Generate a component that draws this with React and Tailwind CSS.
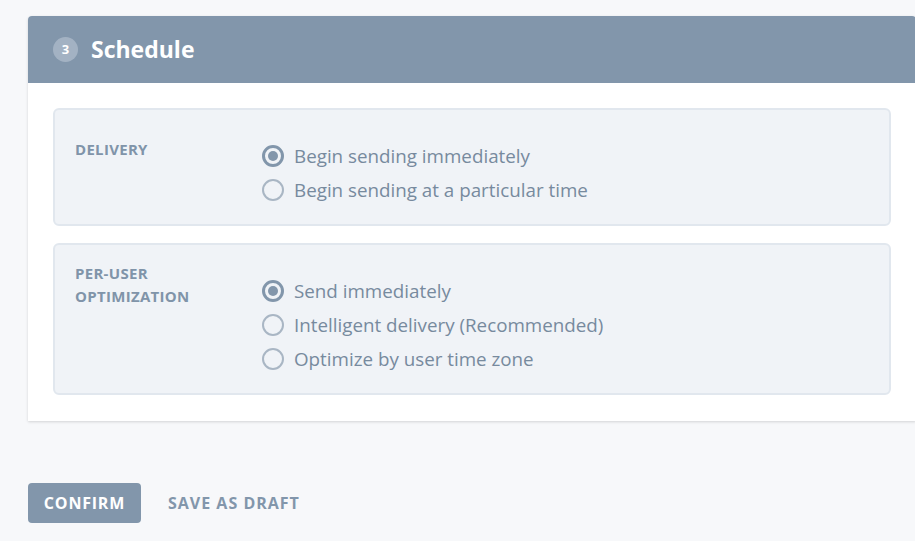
import React, { useState } from 'react';

const FONT = { fontFamily: '"Open Sans", "Liberation Sans", sans-serif' };

const GROUPS = [
  {
    name: 'delivery',
    label: ['DELIVERY'],
    options: ['Begin sending immediately', 'Begin sending at a particular time'],
  },
  {
    name: 'optimization',
    label: ['PER-USER', 'OPTIMIZATION'],
    options: ['Send immediately', 'Intelligent delivery (Recommended)', 'Optimize by user time zone'],
  },
];

function Radio({ checked, text, onClick }) {
  return (
    <div className="h-[34px] flex items-center cursor-pointer" onClick={onClick}>
      {checked ? (
        <span className="w-[22px] h-[22px] rounded-full border-[3px] border-[#8296ab] flex items-center justify-center">
          <span className="w-[10px] h-[10px] rounded-full bg-[#8296ab]" />
        </span>
      ) : (
        <span className="w-[22px] h-[22px] rounded-full border-2 border-[#a9b6c4]" />
      )}
      <span className="ml-[10px] text-[18.8px] text-[#778a9e]">{text}</span>
    </div>
  );
}

function Group({ g, value, onChange }) {
  return (
    <div className="flex bg-[#f0f3f7] border-2 border-[#e1e7ee] rounded-md pl-5 pt-[29px] pb-[17px]">
      <div className="w-[187px] h-[34px] flex items-center">
        <div className="mb-[13px] text-[15px] tracking-[0.3px] leading-[23px] font-bold text-[#8094a9]">
          {g.label.map(l => <div key={l}>{l}</div>)}
        </div>
      </div>
      <div>
        {g.options.map((o, i) => (
          <Radio key={o} text={o} checked={value === i} onClick={() => onChange(i)} />
        ))}
      </div>
    </div>
  );
}

export default function App() {
  const [vals, setVals] = useState({ delivery: 0, optimization: 0 });

  return (
    <div style={FONT} className="min-h-[541px] bg-[#f7f8fa] pt-4 pl-[28px] overflow-hidden">
      <div className="w-[888px] bg-white rounded-t shadow-[0_1px_3px_rgba(0,0,0,0.15)]">
        <div className="h-[67px] bg-[#8296ab] rounded-t flex items-center pl-[25px]">
          <span className="w-[25px] h-[25px] rounded-full bg-[#a3b2c3] text-white text-[13px] font-bold flex items-center justify-center">3</span>
          <span className="ml-[13px] text-white text-[23px] font-bold">Schedule</span>
        </div>
        <div className="px-[25px] pt-[25px] pb-[26px] flex flex-col gap-[17px]">
          {GROUPS.map(g => (
            <Group key={g.name} g={g} value={vals[g.name]} onChange={i => setVals(v => ({ ...v, [g.name]: i }))} />
          ))}
        </div>
      </div>
      <div className="mt-[62px] flex items-center">
        <button className="w-[113px] h-10 bg-[#8296ab] rounded text-white text-[16px] tracking-[0.8px] font-bold">CONFIRM</button>
        <button className="ml-[27px] text-[#8296ab] text-[16px] tracking-[1px] font-bold">SAVE AS DRAFT</button>
      </div>
    </div>
  );
}
